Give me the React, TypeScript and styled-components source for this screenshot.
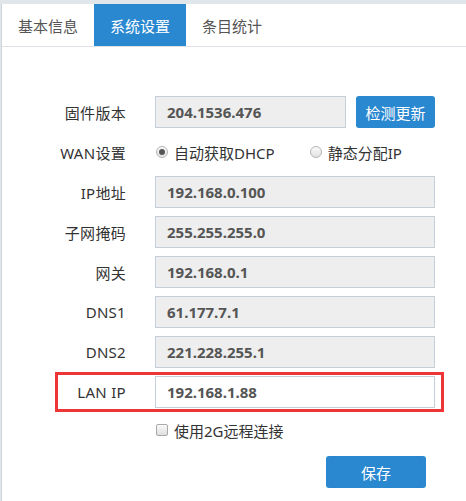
import React from "react";
import styled, { createGlobalStyle } from "styled-components";

const Global = createGlobalStyle`
  html, body { margin: 0; padding: 0; background: #e1e6eb; }
  body { font-family: "Noto Sans", "Noto Sans CJK SC", sans-serif; }
  * { box-sizing: border-box; }
`;

const Panel = styled.div`
  margin: 4px 0 0 1px;
  border-left: 1px solid #cfd5dc;
  background: #fff;
  min-height: 497px;
`;

const TabBar = styled.div`
  display: flex;
  height: 43px;
  border-bottom: 1px solid #dde1e6;
`;

const Tab = styled.div<{ $active?: boolean }>`
  display: flex;
  align-items: center;
  padding: 0 16px;
  height: 42px;
  font-size: 15px;
  color: ${(p) => (p.$active ? "#fff" : "#555")};
  background: ${(p) => (p.$active ? "#2a88d1" : "transparent")};
`;

const Form = styled.div`
  margin-left: 57px;
  width: 381px;
  padding-top: 49px;
  display: flex;
  flex-direction: column;
  gap: 8px;
`;

const Row = styled.div<{ $highlight?: boolean; $h?: number }>`
  display: grid;
  grid-template-columns: 67px 280px;
  column-gap: 29px;
  align-items: center;
  height: ${(p) => p.$h ?? 32}px;
  ${(p) => (p.$highlight ? "outline: 3px solid #ee3636; outline-offset: 1px;" : "")}
`;

const Label = styled.div`
  text-align: right;
  font-size: 15px;
  color: #333;
  white-space: nowrap;
  letter-spacing: 0.3px;
`;

const Field = styled.div`
  display: flex;
  gap: 10px;
  align-items: center;
`;

const Value = styled.div<{ $editable?: boolean; $w?: number }>`
  width: ${(p) => (p.$w ? `${p.$w}px` : "100%")};
  height: 32px;
  display: flex;
  align-items: center;
  padding-left: 11px;
  border: 1px solid #c6cfd9;
  background: ${(p) => (p.$editable ? "#fff" : "#eeeeee")};
  font-size: 15px;
  font-weight: 700;
  color: #555;
`;

const Button = styled.button<{ $w: number }>`
  width: ${(p) => p.$w}px;
  height: 32px;
  border: none;
  border-radius: 3px;
  background: #2a88d1;
  color: #fff;
  font-family: "Noto Sans", "Noto Sans CJK SC", sans-serif;
  font-size: 15px;
  padding: 0;
`;

const Options = styled.div`
  display: flex;
  align-items: center;
  gap: 34px;
`;

const Option = styled.label`
  display: flex;
  align-items: center;
  gap: 6px;
  font-size: 15px;
  color: #333;
  margin-left: 1px;
`;

const Radio = styled.span<{ $checked?: boolean }>`
  width: 12px;
  height: 12px;
  border-radius: 50%;
  border: 1px solid #b5b5b5;
  background: linear-gradient(#fafafa, #e2e2e2);
  display: flex;
  align-items: center;
  justify-content: center;
  &::after {
    content: "";
    width: 6px;
    height: 6px;
    border-radius: 50%;
    background: ${(p) => (p.$checked ? "#555" : "transparent")};
  }
`;

const Check = styled.span`
  width: 12px;
  height: 12px;
  border-radius: 2px;
  border: 1px solid #a9a9a9;
  background: linear-gradient(#fafafa, #dedede);
`;

const ActionRow = styled.div`
  display: flex;
  height: 32px;
  margin-top: 4px;
  padding-left: 267px;
`;

const rows = [
  { label: "IP地址", value: "192.168.0.100" },
  { label: "子网掩码", value: "255.255.255.0" },
  { label: "网关", value: "192.168.0.1" },
  { label: "DNS1", value: "61.177.7.1" },
  { label: "DNS2", value: "221.228.255.1" },
];

export default function App() {
  return (
    <>
      <Global />
      <Panel>
        <TabBar>
          <Tab>基本信息</Tab>
          <Tab $active>系统设置</Tab>
          <Tab>条目统计</Tab>
        </TabBar>
        <Form>
          <Row>
            <Label>固件版本</Label>
            <Field>
              <Value $w={191}>204.1536.476</Value>
              <Button $w={79}>检测更新</Button>
            </Field>
          </Row>
          <Row>
            <Label>WAN设置</Label>
            <Options>
              <Option>
                <Radio $checked />
                自动获取DHCP
              </Option>
              <Option>
                <Radio />
                静态分配IP
              </Option>
            </Options>
          </Row>
          {rows.map((r) => (
            <Row key={r.label}>
              <Label>{r.label}</Label>
              <Value>{r.value}</Value>
            </Row>
          ))}
          <Row $highlight>
            <Label>LAN IP</Label>
            <Value $editable>192.168.1.88</Value>
          </Row>
          <Row $h={28}>
            <span />
            <Option>
              <Check />
              使用2G远程连接
            </Option>
          </Row>
          <ActionRow>
            <Button $w={100}>保存</Button>
          </ActionRow>
        </Form>
      </Panel>
    </>
  );
}
